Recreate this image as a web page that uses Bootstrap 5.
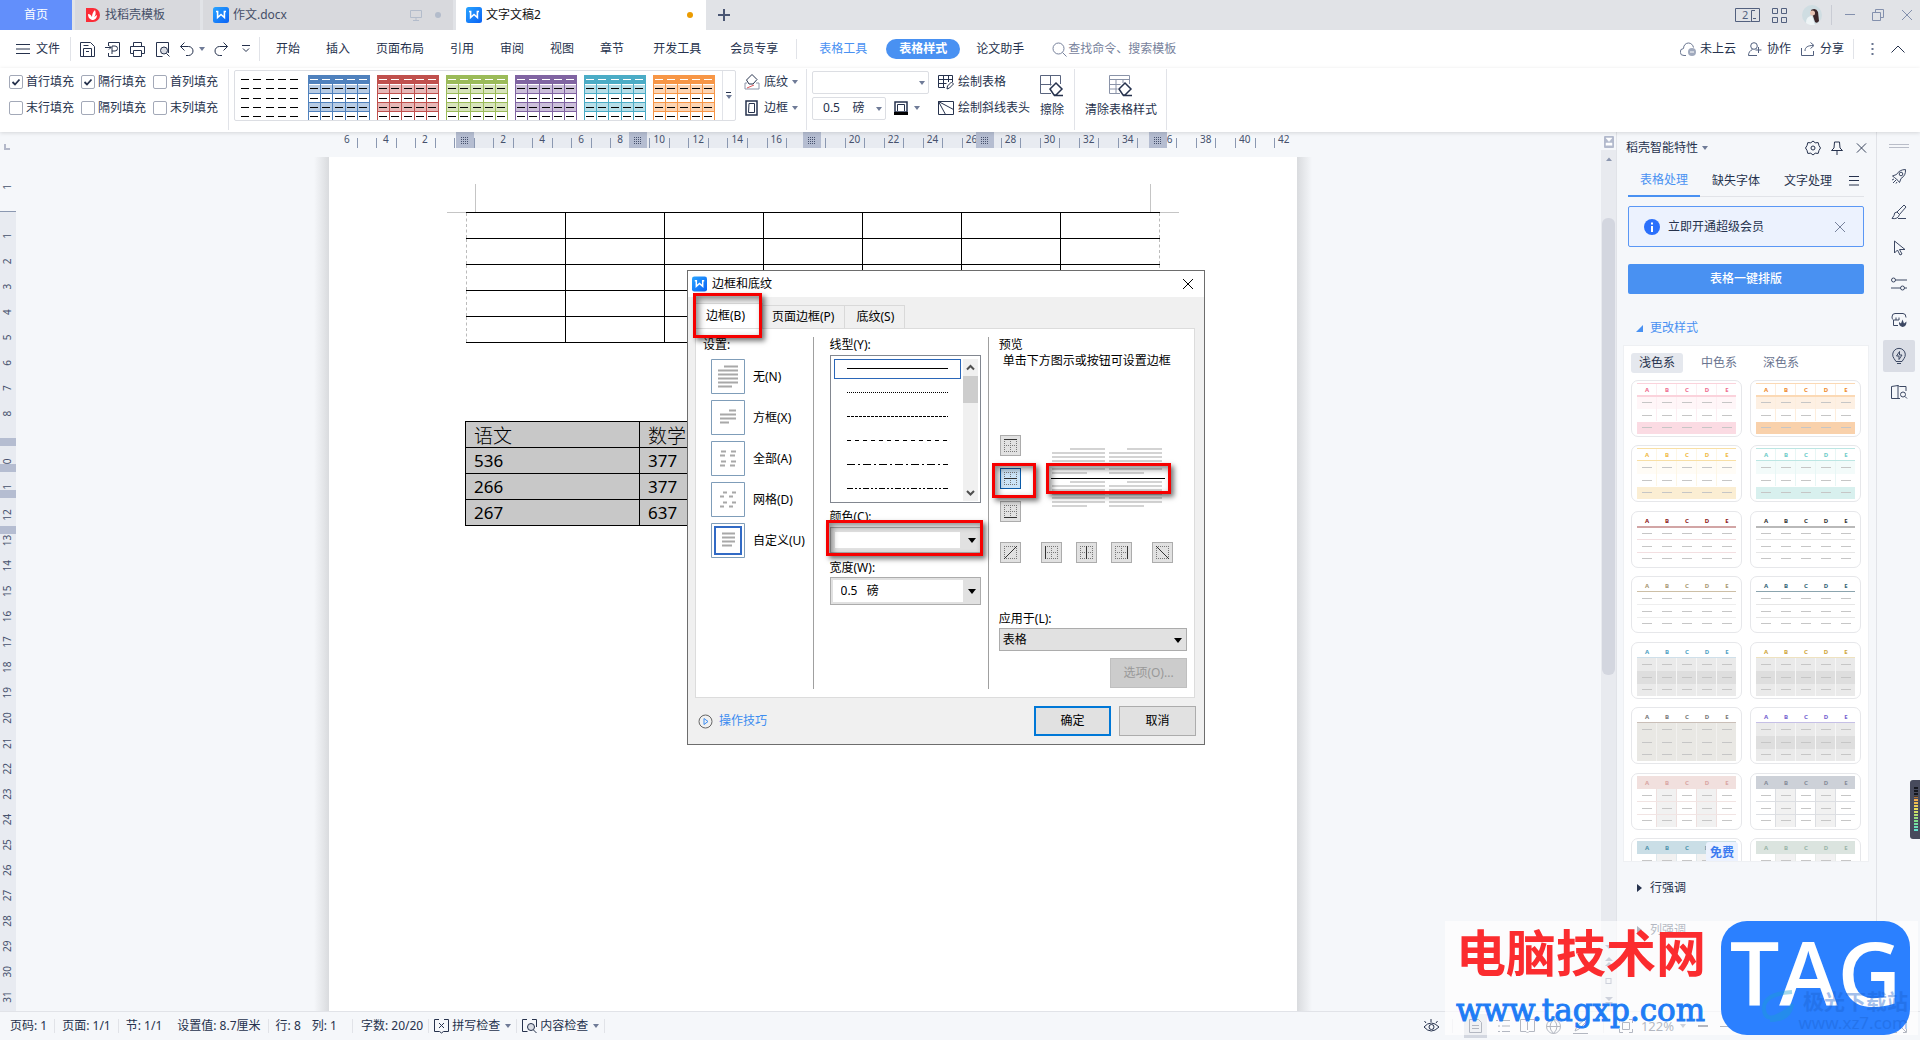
<!DOCTYPE html>
<html lang="zh-CN">
<head>
<meta charset="utf-8">
<title>文字文稿2</title>
<meta name="viewport" content="width=device-width, initial-scale=1">
<link rel="stylesheet" href="https://cdn.jsdelivr.net/npm/bootstrap@5.3.0/dist/css/bootstrap.min.css">
<style>
:root{--ink:#26324d;--line:#e1e3e8;--blue:#4991f2;--pane:#f5f7fa}
html{overflow:hidden}
body{font:12px/16px "Noto Sans","Noto Sans CJK SC",sans-serif;color:var(--ink);background:var(--pane);height:100vh;overflow:hidden}
svg{display:block;flex:none;fill:none;stroke:currentColor}
svg text{stroke:none;fill:currentColor}
button{font:inherit;color:inherit;background:none;border:0;padding:0;white-space:nowrap}
select,input{font:inherit;color:inherit}
a{color:inherit;text-decoration:none}
.caret{width:0;height:0;border:3px solid transparent;border-top:4px solid #6f7b97;border-bottom:0;flex:none}
.vsep{width:1px;background:var(--line);flex:none}
/* tab strip */
.tabstrip{height:30px;background:#e1e3e7}
.doctab{height:30px;padding:0 9px 0 10px;background:#d8d9dd;color:#454f68;gap:4px}
.doctab.current{background:#fff;color:#111}
.tab-home{width:72px;background:#628ffb;color:#fff;margin-right:3px}
.wide-tab{width:250px;margin-right:3px}
.winctl{color:#8390ad}
/* menu row */
.menurow{height:38px;background:#fff}
.menurow .tabs-main{gap:26px;margin-left:16px}
.pill{background:var(--blue);color:#fff;font-weight:700;border-radius:10px;padding:2px 13px}
/* ribbon */
.ribbon{height:64px;background:#fff;box-shadow:0 1px 4px #0002;z-index:2;padding-top:1px}
.ribbon .vsep{height:61px}
.two{display:grid;grid-template-rows:26px 26px;align-items:center}
.checks{grid-template-columns:72px 72px 66px;margin:0 9px}
.checks label{gap:3px}
.checks input{appearance:none;width:14px;height:14px;margin:0;border:1px solid #a3a9b8;border-radius:2px;background:#fff}
.checks input:checked{background:#fff url("data:image/svg+xml,%3Csvg xmlns='http://www.w3.org/2000/svg' viewBox='0 0 12 12'%3E%3Cpath d='M2.5 6l2.5 2.5 4.5-5' fill='none' stroke='%2326324d' stroke-width='1.8'/%3E%3C/svg%3E")}
.gallery{height:51px;width:502px;border:1px solid #dcdee3;border-radius:2px;margin:1px 8px 0 5px;padding:4px 0 0 4px;gap:7px;overflow:hidden}
.boxsel{appearance:none;border:1px solid #dcdee3;border-radius:2px;background:#fff;height:23px;padding:0 10px}
.withcaret{position:relative}
.withcaret>.caret{position:absolute;right:4px;top:10px}
/* workspace */
.hr-strip{height:25px}
.vruler{width:16px}
.sheet{width:968px;background:#fff;box-shadow:-1px 0 0 #dcdde0}
.canvas-area{padding-left:9px}
.sheetwrap{position:relative;width:968px}
.sheetwrap::before,.sheetwrap::after{content:"";position:absolute;top:0;bottom:0;width:15px}
.sheetwrap::before{right:100%;background:linear-gradient(to left,#d9dbde,#f5f7fa)}
.sheetwrap::after{left:100%;background:linear-gradient(to right,#d9dbde,#f5f7fa)}
.doctable{border-collapse:collapse;color:#000}
.t-blank{width:694px;margin:55px 0 0 137px;table-layout:fixed}
.t-blank td{height:26px;border:1px solid #000}
.t-blank td:first-child{border-left:1px dashed #bbb}
.t-blank td:last-child{border-right:1px dashed #bbb}
.t-data{width:694px;margin:78px 0 0 136px;background:#c8c8c8;table-layout:fixed;font-size:17px;line-height:25px}
.t-data td,.t-data th{border:1px solid #000;padding:0 8px;font-weight:400;height:26px}
.t-data th{font-family:"Noto Sans CJK SC",sans-serif;font-weight:300;font-size:19px;line-height:24px}
.marks{position:absolute;left:118px;top:27px;color:#c5c5c5}
/* dialog */
.dlg{position:absolute;left:358px;top:113px;width:518px;background:#f0f0f0;border:1px solid #6d6d6d;color:#000}
.dlg-title{background:#fff;height:26px;padding:0 10px 0 4px}
.dlg-tabs{margin:6px 0 0 7px;height:25px}
.dlg-tabs button{border:1px solid #d9d9d9;border-bottom:0;height:23px;padding:0 10px 0 9px;margin-left:-1px}
.dlg-tabs button+button+button{padding:0 10px 0 11px}
.dlg-tabs .on{background:#fff;height:25px;width:68px;margin:0;padding:0 0 0 10px;text-align:left}
.dlg-panel{background:#fff;border:1px solid #dcdcdc;margin:0 9px 0 7px;height:370px;padding:8px 7px 8px 7px}
.rule{width:1px;background:#a0a0a0;flex:none}
.redbox{position:absolute;border:3px solid #f60000;box-shadow:3px 3px 5px #0008,inset 3px 3px 6px #0007;pointer-events:none}
.opt{height:35px;gap:8px;margin-bottom:6px;text-align:left}
.opt svg{color:#a8a8a8}
.linelist{border:1px solid #828790;width:151px;height:148px;padding:3px 2px 1px 3px}
.linelist button{display:block;width:127px;height:20px;margin-bottom:4px;padding-left:12px;border:1px solid transparent}
.linelist .on{border-color:#2a66b8}
.combo{position:relative;width:151px;border:1px solid #acacac;background:#e1e1e1;padding:2px 17px 2px 2px}
.combo select,.applysel select{appearance:none;border:0;background:#fff;width:100%;height:100%;padding:0 8px;display:block}
.tri{position:absolute;right:4px;top:50%;margin-top:-2px;border:4px solid transparent;border-top:5px solid #000;border-bottom:0;pointer-events:none}
.applysel{position:relative;height:23px;border:1px solid #acacac;background:#e1e1e1}
.applysel select{background:none;padding:0 3px}
.bb{width:21px;height:21px;border:1px solid #acacac;background:#e1e1e1;color:#333}
.bb.on{border-color:#0a5aa8;background:#cce4f7}
.dlgbtn{width:77px;height:30px;border:1px solid #acacac;background:#e1e1e1}
.dlgbtn.go{border:2px solid #0078d7}
.dlgbtn:disabled{background:#ccc;color:#999;border-color:#bfbfbf}
/* scroll bar, task pane */
.vscroll{width:15px;background:#e8eaef;color:#6f7b97}
.thumb{background:#d3d6df;border-radius:6px;height:457px;margin:56px 1px 0 1px}
.taskpane{width:261px;border-left:1px solid var(--line);border-right:1px solid var(--line)}
.ptabs{margin:14px 12px 0 11px;border-bottom:1px solid var(--line);height:27px}
.ptabs button{width:72px;height:27px;padding-bottom:6px}
.ptabs .on{color:var(--blue);border-bottom:2px solid var(--blue)}
.notice{margin:9px 12px 0 11px;height:41px;border:1px solid #5a97f5;border-radius:2px;background:#ecf2fe;padding:0 17px 0 15px;gap:8px}
.onekey{margin:17px 12px 0 11px;height:30px;background:var(--blue);color:#fff;font-weight:500;border-radius:2px}
.stylebox{background:#fff;border:1px solid #eef0f3;margin:9px 7px 0 6px;height:517px;padding:7px 7px 0 7px;overflow:hidden;color:#6a7590}
.stylebox .chips{gap:10px}
.chips button{width:52px;height:20px;border-radius:3px}
.chips .on{background:#e5e8ee;color:var(--ink)}
.stylegrid{display:grid;grid-template-columns:111px 111px;gap:0 8px;height:515px;align-content:space-between;margin-top:7px}
.stylegrid button{position:relative;height:57px;border:1px solid #e6e7ea;border-radius:7px;padding:0 0 0 5px}
.free{position:absolute;right:3px;top:3px;background:#ecf2fe;color:#3b7bf0;font-weight:700;padding:3px 4px;border-radius:3px}
.sidebar{width:43px;padding-top:12px;color:#3c4863}
.sidebar button{width:32px;height:32px;margin-bottom:4px;border-radius:2px}
.sidebar .on{background:#dadde5}
/* status bar */
.status{height:29px;border-top:1px solid var(--line);background:var(--pane)}
.status .vsep{height:14px}
.status .grp{gap:7px}
.mark-over{position:absolute;right:2px;bottom:5px;width:473px;height:114px;background:#ffffffa6;z-index:5;padding-left:11px}
.mark-name{font:700 50px/50px "Noto Sans CJK SC",sans-serif;color:#fb2c2f;white-space:nowrap;margin-top:4px}
.mark-url{font:31px/40px "DejaVu Serif",serif;color:#1f7cf5;white-space:nowrap;margin-top:15px;-webkit-text-stroke:1px #1f7cf5}
.taglogo{position:absolute;right:8px;top:0;width:189px;height:114px;border-radius:26px;background:#2b80ff;color:#fff;font:600 88px/102px "Open Sans",sans-serif;text-align:center;white-space:nowrap}
.ghost{position:absolute;right:10px;bottom:2px;text-align:right;color:#1b62cf;opacity:.4}
.ghost b{display:block;font-size:21px;line-height:26px}
.ghost span{font-size:17px;line-height:18px}
.ghost svg{position:absolute;right:112px;top:0;color:#1b9fd0}
.meter{position:absolute;right:0;top:780px;width:10px;height:59px;background:#474a5c;border-radius:3px 0 0 3px;padding:7px 2px 7px 4px;z-index:5}
.meter i{display:block;height:100%;background:repeating-linear-gradient(transparent 0 2px,#474a5c 2px 3px),linear-gradient(#15171f 20%,#f0a04a 25%,#e8e05a 50%,#7fe08a 75%,#5ee0d8)}
</style>
<script src="https://cdn.jsdelivr.net/npm/bootstrap@5.3.0/dist/js/bootstrap.bundle.min.js"></script>
</head>
<body class="d-flex flex-column position-relative">
<svg width="0" height="0" class="position-absolute">
<defs><linearGradient id="wg" x1="0" y1="0" x2="1" y2="1"><stop offset="0" stop-color="#29a4ff"/><stop offset="1" stop-color="#0a62f5"/></linearGradient></defs>
<symbol id="w" viewBox="0 0 16 16"><rect width="16" height="16" rx="2.5" fill="url(#wg)" stroke="none"/><path d="M3 4.5h1.6v6l3.4-3 3.4 3v-6H13" stroke="#fff" stroke-width="1.6"/></symbol>
<symbol id="x" viewBox="0 0 12 12"><path d="M1 1l10 10M11 1L1 11"/></symbol>
</svg>

<header class="tabstrip d-flex align-items-stretch">
  <button class="tab-home">首页</button>
  <button class="doctab d-flex align-items-center" style="width:125px;margin-right:3px"><svg width="16" height="16"><path d="M1 1h7a7 7 0 0 1 0 14H1z" fill="#fb2c38" stroke="none"/><path d="M7 13C4 12 3 10 3 7c2 0 3 1 4 3 0-3 1-5 3-7 1 3 1 5-1 7l3-2c0 3-2 5-5 5z" fill="#fff" stroke="none"/></svg>找稻壳模板</button>
  <button class="doctab wide-tab d-flex align-items-center"><svg width="16" height="16"><use href="#w"/></svg>作文.docx
    <svg class="ms-auto" width="12" height="12" style="color:#b3bccb;margin-right:6px"><path d="M.5 1.5h11v7H.5zM6 8.500v3M3 11.500h6"/></svg><svg width="12" height="12" style="color:#b3bccb"><circle cx="6" cy="6" r="3" fill="currentColor" stroke="none"/></svg></button>
  <button class="doctab current d-flex align-items-center" style="width:250px"><svg width="16" height="16"><use href="#w"/></svg>文字文稿2
    <svg class="ms-auto" width="14" height="12"><circle cx="7" cy="6" r="3" fill="#eb9b00" stroke="none"/></svg></button>
  <button class="px-2 ms-1" aria-label="新建"><svg width="12" height="12" stroke-width="2" style="color:#4a5673"><path d="M6 0v12M0 6h12"/></svg></button>
  <div class="winctl d-flex align-items-center ms-auto" style="padding-right:7px">
    <svg width="25" height="14" style="color:#52607e"><path d="M15 13.500H.500V.500h24v13h-9z"/><path d="M20 2.500h-3.500v11M18 10.500h3"/><text x="7" y="11" font-size="11">2</text></svg>
    <svg width="15" height="15" style="color:#52607e;margin-left:12px"><path d="M.5.500h5v5h-5zM9.500.500h5v5h-5zM.5 9.500h5v5h-5zM9.500 9.500h5v5h-5z"/></svg>
    <svg width="20" height="20" style="margin-left:15px"><g stroke="none"><circle cx="10" cy="10" r="10" fill="#cfdde2"/><path d="M9 5q5-3 7 2l1 9q-2 3-4 1l-2-6z" fill="#3a2528"/><circle cx="10.500" cy="8" r="2.500" fill="#e8c4b4"/><path d="M4 18q0-7 6-7l3 9q-5 1-9-2z" fill="#eef4f6"/></g></svg>
    <span class="vsep" style="height:20px;margin:0 13px 0 9px;background:#c9ccd4"></span>
    <svg width="10" height="12"><path d="M0 5.500h10"/></svg>
    <svg width="12" height="12" style="margin:0 17px"><path d="M.5 3.500h8v8h-8zM3.500 3V.500h8v8H9"/></svg>
    <svg width="12" height="12"><use href="#x"/></svg>
  </div>
</header>

<nav class="menurow d-flex align-items-center">
  <button class="d-flex align-items-center" style="margin-left:16px;gap:6px"><svg width="14" height="12"><path d="M0 1.500h14M0 6h14M0 10.500h14"/></svg>文件</button>
  <span class="vsep" style="height:24px;margin:0 9px 0 10px"></span>
  <div class="d-flex align-items-center" style="gap:10px">
    <svg width="15" height="15"><path d="M.5.500h10l4 4v10H.5zM3.500 14V6.500h8V14M3.500 3.500h5M6 9.500h3"/></svg>
    <svg width="15" height="15"><path d="M3.500 4V.500h11v14h-11V11M0 5.500h6M4 3.500l2 2-2 2M7 12V4h3a2 2 0 0 1 0 5H7"/></svg>
    <svg width="15" height="15"><path d="M3.500 5V.500h8V5M3.500 11.500h-3v-7h14v7h-3M3.500 8.500h8v6h-8z"/></svg>
    <svg width="15" height="15"><path d="M13.500 11V.500H1.500v14h6"/><circle cx="9" cy="8.500" r="3.500" fill="#d9dce3"/><path d="M11.500 11.500l3 3"/></svg>
    <svg width="14" height="15"><path d="M4.500.500L.5 4.500l4 4M.5 4.500h8a4.500 4.500 0 0 1 0 9H6"/></svg>
  </div>
  <span class="caret" style="margin:0 9px 0 5px"></span>
  <svg width="14" height="15"><path d="M9.500.500l4 4-4 4M13.500 4.500h-8a4.500 4.500 0 0 0 0 9H8"/></svg>
  <svg width="8" height="8" style="margin-left:14px"><path d="M0 .500h8M1 3.500l3 3 3-3"/></svg>
  <span class="vsep" style="height:24px;margin-left:9px"></span>
  <div class="tabs-main d-flex align-items-center">
    <a href="#">开始</a><a href="#">插入</a><a href="#">页面布局</a><a href="#">引用</a><a href="#">审阅</a><a href="#">视图</a><a href="#">章节</a><a href="#" style="padding:0 3px">开发工具</a><a href="#">会员专享</a>
  </div>
  <span class="vsep" style="height:20px;margin:0 22px 0 18px"></span>
  <a href="#" style="color:var(--blue)">表格工具</a>
  <a href="#" class="pill" style="margin:0 16px 0 19px">表格样式</a>
  <a href="#">论文助手</a>
  <button class="d-flex align-items-center" style="margin-left:28px;gap:1px;color:#77829c"><svg width="15" height="15"><circle cx="6.500" cy="6.500" r="5.500"/><path d="M10.500 10.500l4 4"/></svg>查找命令、搜索模板</button>
  <div class="ms-auto d-flex align-items-center" style="padding-right:15px">
    <svg width="17" height="15" style="color:#68748f"><path d="M6 13.500H4a3.500 3.500 0 0 1-.5-7C3.500 3 6 1 8.500 1s4.500 2 5 4.500"/><circle cx="12" cy="10" r="4" fill="#a0a9bd" stroke="none"/><path d="M10 10h4" stroke="#fff"/></svg><button style="margin:0 12px 0 3px">未上云</button>
    <svg width="15" height="14" style="color:#52607e"><circle cx="6" cy="4" r="3.300"/><path d="M9 13.500H.500c0-3 1.500-5 4-6M10.500 5v6M7.500 8h6"/></svg><button style="margin:0 10px 0 4px">协作</button>
    <svg width="15" height="14" style="color:#52607e"><path d="M.5 6v7.500h12V9M4 9c0-4 3-5.500 8-5.500M9.500.500l3.500 3-3.500 3"/></svg><button style="margin:0 9px 0 4px">分享</button>
    <span class="vsep" style="height:20px"></span>
    <svg width="3" height="14" style="margin:0 17px;color:#68748f"><path d="M1.500 1v2M1.500 6v2M1.500 11v2" stroke-width="2"/></svg>
    <svg width="14" height="8"><path d="M.5 7.500L7 1l6.500 6.500"/></svg>
  </div>
</nav>

<section class="ribbon d-flex position-relative">
  <div class="two checks">
    <label class="d-flex align-items-center"><input type="checkbox" checked>首行填充</label><label class="d-flex align-items-center"><input type="checkbox" checked>隔行填充</label><label class="d-flex align-items-center"><input type="checkbox">首列填充</label>
    <label class="d-flex align-items-center"><input type="checkbox">末行填充</label><label class="d-flex align-items-center"><input type="checkbox">隔列填充</label><label class="d-flex align-items-center"><input type="checkbox">末列填充</label>
  </div>
  <span class="vsep"></span>
  <div class="gallery d-flex" id="gallery"></div>
  <div class="two">
    <button class="d-flex align-items-center" style="gap:4px"><svg width="16" height="16"><path d="M8 .500l5 5-4 4.500H5L2.500 6z"/><path d="M3 9H1v6h14V9h-3" stroke="#8d96aa"/><path d="M3 14l7-3" stroke="#e0565b"/></svg>底纹<span class="caret"></span></button>
    <button class="d-flex align-items-center" style="gap:4px"><svg width="16" height="16"><path d="M2 1h11v14H2z" stroke-width="1.500"/><path d="M5 3.500h5.500v9H4.500z"/></svg>边框<span class="caret"></span></button>
  </div>
  <span class="vsep" style="margin:0 5px 0 8px"></span>
  <div class="two">
    <div class="withcaret" style="width:117px"><select class="boxsel w-100" aria-label="线型"><option></option></select><span class="caret"></span></div>
    <div class="d-flex align-items-center"><div class="withcaret" style="width:74px"><select class="boxsel w-100" aria-label="粗细"><option>0.5 &nbsp; &nbsp;磅</option></select><span class="caret"></span></div>
    <svg width="14" height="14" style="margin:0 6px 0 8px"><path d="M1 11V1h12v10z" stroke-width="1.500"/><path d="M3.500 10V3.500h7V10"/><path d="M0 12.500h14" stroke="#000" stroke-width="3"/></svg><span class="caret"></span></div>
  </div>
  <div class="two" style="margin-left:9px">
    <button class="d-flex align-items-center" style="gap:4px"><svg width="16" height="16"><path d="M7 13.500H.500V1.500h14V8M.5 5.500h14M.5 9.500h8M5.500 1.500v12M10.500 1.500V8"/><path d="M9 15l.5-3 4-4 2 2-4 4z" fill="#fff"/></svg>绘制表格</button>
    <button class="d-flex align-items-center" style="gap:4px"><svg width="16" height="16"><path d="M.5 1.500h15v13H.500zM.5 1.500l15 8M.5 1.500l7 13"/></svg>绘制斜线表头</button>
  </div>
  <button class="d-flex flex-column align-items-center" style="margin:6px 10px 0 10px;gap:5px"><svg width="24" height="22"><path d="M11 18.500H.500V.500h20V9M.5 9.500h11M10.500.500v10" stroke="#59647e"/><path d="M10 14l6-6 6 6-6 6h-2zM14 20.500h9" fill="#fff" stroke-width="1.500"/></svg>擦除</button>
  <span class="vsep" style="margin-right:10px"></span>
  <button class="d-flex flex-column align-items-center" style="margin:6px 9px 0 0;gap:5px"><svg width="24" height="22"><path d="M11 18.500H.500V.500h20V9M.5 4.500h20M.5 9.500h11M.5 14h8M7 4v14M14 4v4" stroke="#8a93a8"/><path d="M10 14l6-6 6 6-6 6h-2zM14 20.500h9" fill="#fff" stroke-width="1.500"/></svg>清除表格样式</button>
  <span class="vsep"></span>
</section>

<main class="d-flex flex-grow-1" style="min-height:0">
  <div class="d-flex flex-column flex-grow-1 overflow-hidden">
    <div class="hr-strip d-flex justify-content-center position-relative" style="padding-left:25px">
      <svg id="hruler" width="968" height="25" style="overflow:visible;color:#46516d"></svg>
      <svg width="6" height="6" class="position-absolute" style="left:4px;top:12px;color:#b3b8c9" stroke-width="2"><path d="M1 0v5h5"/></svg>
    </div>
    <div class="d-flex flex-grow-1" style="min-height:0">
      <svg id="vruler" class="vruler h-100" width="16" style="color:#46516d"></svg>
      <div class="canvas-area d-flex justify-content-center flex-grow-1">
        <div class="sheetwrap">
          <div class="sheet h-100 overflow-hidden">
            <svg class="marks" width="732" height="29"><path d="M28.500 0v28M703.500 0v28M0 28.500h19M713 28.500h19"/></svg>
            <table class="doctable t-blank"><tbody id="blank"></tbody></table>
            <table class="doctable t-data"><colgroup><col style="width:174px"><col><col><col></colgroup>
              <thead><tr><th>语文</th><th>数学</th><th></th><th></th></tr></thead>
              <tbody><tr><td>536</td><td>377</td><td></td><td></td></tr><tr><td>266</td><td>377</td><td></td><td></td></tr><tr><td>267</td><td>637</td><td></td><td></td></tr></tbody></table>
          </div>

          <div class="dlg" role="dialog" aria-label="边框和底纹">
            <div class="dlg-title d-flex align-items-center"><svg width="15" height="16"><use href="#w"/></svg><span style="margin-left:5px">边框和底纹</span><button class="ms-auto" aria-label="关闭"><svg width="12" height="12"><use href="#x"/></svg></button></div>
            <div class="dlg-tabs d-flex align-items-end position-relative"><button class="on">边框(B)</button><button>页面边框(P)</button><button>底纹(S)</button>
              <span class="redbox" style="left:-2px;top:-10px;width:69px;height:45px"></span></div>
            <div class="dlg-panel d-flex">
              <div style="width:110px"><div>设置:</div>
                <div id="opts" class="d-flex flex-column" style="margin:6px 0 0 8px"></div></div>
              <span class="rule"></span>
              <div style="margin-left:16px;width:159px" class="position-relative">
                <div style="margin-bottom:2px">线型(Y):</div>
                <div class="linelist d-flex justify-content-between"><div id="lines"></div>
                  <svg width="15" height="142"><path d="M0 0h15v142H0z" fill="#f0f0f0" stroke="none"/><path d="M0 17h15v27H0z" fill="#cdcdcd" stroke="none"/><path d="M4 10.500L7.500 7l3.500 3.500M4 132l3.500 3.500 3.500-3.500" stroke="#505050" stroke-width="2"/></svg></div>
                <label for="clr" style="margin-top:6px">颜色(C):</label>
                <div class="combo" style="height:26px;padding:4px 20px 4px 4px;margin-top:2px"><select id="clr"><option></option></select><span class="tri"></span><span class="redbox" style="left:-5px;top:-8px;width:157px;height:36px"></span></div>
                <label for="wid" style="margin-top:7px">宽度(W):</label>
                <div class="combo" style="height:28px;margin-top:1px"><select id="wid"><option>0.5 &nbsp; 磅</option></select><span class="tri"></span></div>
              </div>
              <span class="rule"></span>
              <div style="margin-left:10px;width:189px" class="d-flex flex-column">
                <div>预览</div><div style="padding-left:4px">单击下方图示或按钮可设置边框</div>
                <div class="d-flex" style="margin-top:66px"><div class="d-flex flex-column position-relative" style="gap:12px" id="bbv"></div>
                  <div class="position-relative" style="margin-left:30px"><svg id="prev" width="115" height="87"></svg><span class="redbox" style="left:-5px;top:28px;width:125px;height:31px"></span></div></div>
                <div class="d-flex" style="margin-top:20px" id="bbh"></div>
                <label for="apply" style="margin-top:48px">应用于(L):</label>
                <div class="applysel" style="margin-top:1px"><select id="apply"><option>表格</option></select><span class="tri"></span></div>
                <button class="dlgbtn align-self-end" style="margin-top:7px" disabled>选项(O)...</button>
              </div>
            </div>
            <div class="d-flex align-items-center" style="padding:8px 8px 8px 10px;gap:8px"><svg width="15" height="15" style="color:#666"><circle cx="7.500" cy="7.500" r="6.500"/><path d="M6 4.500l4 3-4 3z" stroke="#3b8cf0"/></svg><a href="#" style="color:#3b8cf0;margin-left:-2px">操作技巧</a>
              <button class="dlgbtn go ms-auto">确定</button><button class="dlgbtn">取消</button></div>
          </div>
        </div>
      </div>
    </div>
  </div>

  <div class="vscroll position-relative">
    <svg width="15" height="30" style="background:#f5f7fa"><path d="M0 18h15v12H0z" fill="#e8eaef" stroke="none"/><rect x="3" y="4" width="10" height="12" rx="1" fill="#b3bacd" stroke="none"/><path d="M5 6h6L8 9.500zM5 13.500v-2.500h6v2.500" stroke="#fff" fill="#fff" stroke-width=".5"/><path d="M5 29l3-3.500 3 3.500z" fill="#8c97b0" stroke="none"/></svg>
    <div class="thumb"></div>
    <svg class="position-absolute" style="bottom:0;left:0" width="15" height="70"><path d="M4 4h8l-4 4zM4 20l4-4 4 4zM4 25l4-4 4 4zM4 56h8l-4 4zM4 61h8l-4 4z" fill="currentColor" stroke="none"/><rect x="5" y="37.500" width="5" height="5"/></svg>
  </div>

  <aside class="taskpane d-flex flex-column">
    <div class="d-flex align-items-center" style="margin:8px 9px 0 9px"><span>稻壳智能特性</span><span class="caret" style="margin-left:4px"></span>
      <svg class="ms-auto" width="16" height="16"><path d="M8 1l2.200 1.800 3-.2.800 3L15.500 8 14 10.400l-.8 3-3-.2L8 15l-2.200-1.800-3 .2-.8-3L.5 8 2 5.600l.8-3 3 .2z" stroke-linejoin="round"/><circle cx="8" cy="8" r="2"/></svg>
      <svg width="14" height="14" style="margin:0 12px 0 9px"><path d="M4.500 1h5l.5 6 2.500 2.500h-11L4 7zM7 9.500V14"/></svg>
      <svg width="11" height="12"><use href="#x"/></svg></div>
    <div class="ptabs d-flex"><button class="on">表格处理</button><button>缺失字体</button><button>文字处理</button><svg width="10" height="10" style="margin:6px 0 0 5px"><path d="M0 .500h10M0 4.500h10M0 9h10"/></svg></div>
    <div class="notice d-flex align-items-center"><svg width="16" height="16"><circle cx="8" cy="8" r="8" fill="#2b70fb" stroke="none"/><path d="M8 3.500v2M8 7v6" stroke="#fff" stroke-width="2"/></svg><span>立即开通超级会员</span><button class="ms-auto" aria-label="关闭" style="color:#77829c"><svg width="12" height="12"><use href="#x"/></svg></button></div>
    <button class="onekey">表格一键排版</button>
    <button class="d-flex align-items-center" style="margin:26px 0 0 19px;gap:7px;color:var(--blue)"><svg width="7" height="7"><path d="M7 0v7H0z" fill="currentColor" stroke="none"/></svg>更改样式</button>
    <div class="stylebox"><div class="chips d-flex"><button class="on">浅色系</button><button>中色系</button><button>深色系</button></div><div class="stylegrid" id="sg"></div></div>
    <button class="d-flex align-items-center" style="margin:18px 0 0 20px;gap:8px"><svg width="5" height="8"><path d="M0 0l5 4-5 4z" fill="currentColor" stroke="none"/></svg>行强调</button>
    <button class="d-flex align-items-center" style="margin:26px 0 0 20px;gap:8px"><svg width="5" height="8"><path d="M0 0l5 4-5 4z" fill="currentColor" stroke="none"/></svg>列强调</button>
  </aside>

  <div class="sidebar d-flex flex-column align-items-center">
    <svg width="20" height="4" style="color:#b9bdc8;margin-bottom:12px"><path d="M0 .500h20M0 3.500h20"/></svg>
    <div id="side"></div>
    <svg width="16" height="4" class="mt-auto" style="margin-bottom:16px;color:#68748f"><circle cx="2" cy="2" r="1.300"/><circle cx="8" cy="2" r="1.300"/><circle cx="14" cy="2" r="1.300"/></svg>
  </div>
</main>

<footer class="status d-flex align-items-center">
  <div class="grp d-flex align-items-center" style="padding-left:10px"><span>页码: 1</span><span class="vsep"></span><span>页面: 1/1</span><span class="vsep"></span><span>节: 1/1</span><span class="ms-2">设置值: 8.7厘米</span><span class="vsep"></span><span>行: 8</span><span class="ms-1">列: 1</span><span class="vsep ms-2"></span></div>
  <div class="d-flex align-items-center ms-2" style="gap:5px"><span>字数: 20/20</span><span class="vsep"></span>
  <svg width="15" height="15"><path d="M5 .500H.500v12h5L7.500 14l2-1.500h5V.500H10M5 4l5 5M10 4L5 9"/></svg><button style="margin-left:-2px">拼写检查</button><span class="caret"></span><span class="vsep"></span>
  <svg width="15" height="15"><path d="M5 .500H.500v12h5M14.500 8V.500H10M14.500 14l-3-3"/><circle cx="9" cy="8" r="3.500" fill="#d9dce3"/></svg><button style="margin-left:-2px">内容检查</button><span class="caret"></span><span class="vsep"></span></div>
  <div class="d-flex align-items-center ms-auto" style="padding-right:13px">
    <svg width="17" height="16"><path d="M1 9q7-8 15 0-8 8-15 0zM8 4V1M3 5L1.500 3M13 5l1.500-2"/><circle cx="8.500" cy="9" r="2.500"/></svg>
    <span class="vsep" style="margin:0 11px 0 12px"></span>
    <svg width="23" height="24"><path d="M0 0h23v24H0z" fill="#d3d7e0" stroke="none"/><path d="M5.500 5.500h9l3 3v10h-12zM8 11.500h7M8 14.500h7"/></svg>
    <svg width="14" height="14" style="margin:0 10px 0 9px"><path d="M0 1.500h2M4 1.500h10M2 7h2M6 7h8M2 12.500h2M6 12.500h8"/></svg>
    <svg width="15" height="15"><path d="M6 .500H.500v12h5.500l1.500 1.500L9 12.500h5.500V.500H9M7.500 3v8"/></svg>
    <svg width="15" height="15" style="margin:0 12px 0 11px"><circle cx="7.500" cy="7.500" r="7"/><path d="M.5 7.500h14M7.500.500q-7 7 0 14M7.500.500q7 7 0 14"/></svg>
    <svg width="15" height="15"><path d="M0 14.500h15M2 12l2-5 7-6 2 2-7 7z"/></svg>
    <span class="vsep" style="margin:0 15px"></span>
    <svg width="14" height="14"><path d="M0 4V.500h4M10 .500h3.500V4M13.500 10v3.500H10M4 13.500H.500V10M3.500 3.500h7v7h-7z"/></svg>
    <span style="margin:0 6px 0 8px;font-size:13px">122%</span><span class="caret"></span>
    <svg width="182" height="12" style="margin:0 13px 0 12px"><path d="M0 6h10M172 6h10M177 1v10" stroke-width="2"/><path d="M22 6.500h133"/><circle cx="94" cy="6" r="5.500" fill="#fff"/></svg>
    <svg width="14" height="14"><path d="M0 4V.500h4M10 .500h3.500V4M13.500 10v3.500H10M4 13.500H.500V10M1 1l4 4M13 1L9 5M1 13l4-4M13 13L9 9"/></svg>
  </div>
</footer>

<div class="meter"><i></i></div>
<div class="mark-over"><div class="mark-name">电脑技术网</div><div class="mark-url">www.tagxp.com</div>
  <div class="taglogo">TAG</div><div class="ghost"><svg width="36" height="36" stroke-width="4"><path d="M32 4Q2 6 4 22t26-2M10 32q20 0 22-16"/></svg><b>极光下载站</b><span>www.xz7.com</span></div></div>

<script>
const $ = id => document.getElementById(id);
const rep = (n, f) => Array.from({length: n}, (_, i) => f(i)).join('');

/* horizontal ruler: one unit is 19.52px, zero lies 135px inside the sheet */
let h = '<path d="M136 0h684v16H136z" fill="#e8ebf1" stroke="none"/>';
for (let n = -6; n <= 42; n++) {
  const x = 135 + n * 19.52;
  if (n % 2 === 0 && n !== 0) h += `<text x="${x}" y="11" font-size="10" text-anchor="middle">${Math.abs(n)}</text>`;
  if (n < 42) h += `<path d="M${Math.round(x + 9.7)}.500 6v10" stroke="#8b98b1"/>`;
}
[127, 300, 474, 647, 820].forEach(x => {
  h += `<path d="M${x} 0h18v16h-18z" fill="#b5bdd1" stroke="none"/>` + rep(4, i => `<path d="M${x + 5} ${5.5 + i * 2}h8" stroke="#46516d" stroke-dasharray="1 1"/>`);
});
$('hruler').innerHTML = h;

let v = '<path d="M0 54h16v2000H0z" fill="#e8ebf1" stroke="none"/><path d="M0 54.500h16" stroke="#8b98b1"/>';
const vnum = (y, t) => `<text transform="translate(11 ${y}) rotate(-90)" font-size="10" text-anchor="middle">${t}</text>`;
v += vnum(30, 1);
for (let n = 1; n <= 31; n++) if (n !== 9) v += vnum(79 + (n - 1) * 25.37, n);
[281, 307, 333, 369].forEach(y => v += `<path d="M0 ${y}h16v8H0z" fill="#b5bdd1" stroke="none"/>`);
$('vruler').innerHTML = v;

$('blank').innerHTML = rep(5, () => '<tr>' + rep(7, () => '<td></td>') + '</tr>');

/* ribbon table styles */
$('gallery').innerHTML = [null, ['#4f81bd', '#b8cce4'], ['#c0504d', '#e6b8b7'], ['#9bbb59', '#d8e4bc'], ['#8064a2', '#ccc0da'], ['#4bacc6', '#b7dee8'], ['#f79646', '#fcd5b4']].map(c => {
  let s = '';
  if (c) {
    s += `<g stroke="none"><path d="M0 0h62v46H0z" fill="#fff"/><path d="M0 0h62v9H0z" fill="${c[0]}"/><path d="M0 10h62v8H0zM0 28h62v8H0z" fill="${c[1]}"/></g><path d="M0 18.500h62M0 27.500h62M0 36.500h62M.5 9v37M61.500 9v37M12.500 9v37M24.500 9v37M37.500 9v37M49.500 9v37" stroke="${c[0]}"/>`;
  }
  s += rep(5, r => rep(5, k => `<path d="M${2 + Math.round(k * 12.300)} ${[4.5, 13.500, 23.500, 32.500, 41.500][r]}h8" stroke="${c && !r ? '#fff' : '#000'}"/>`));
  return `<button aria-label="表格样式"><svg width="62" height="46">${s}</svg></button>`;
}).join('') + '<svg width="13" height="49" style="margin-top:-4px"><path d="M.5 0v49" stroke="#e1e3e8"/><path d="M4 21.500h5"/><path d="M4 24h6l-3 4z" fill="#6f7b97" stroke="none"/></svg>';

/* border presets */
const presets = [
  ['无(N)', 'M13 7.500h14M7 11.500h20M7 15.500h20M7 19.500h20M7 23.500h20M7 27.500h14'],
  ['方框(X)', 'M18 10.500h7M9 14.500h16M9 18.500h16M9 22.500h9'],
  ['全部(A)', 'M10 10.500h5M20 10.500h5M9 14.500h5M19 14.500h5M10 20.500h5M20 20.500h5M9 24.500h5M19 24.500h5'],
  ['网格(D)', 'M12 10.500h4M21 10.500h4M9 14.500h4M18 14.500h4M12 20.500h4M21 20.500h4M9 24.500h4M18 24.500h4'],
  ['自定义(U)', 'M11 10.500h13M11 14.500h13M11 18.500h13M11 22.500h10']];
$('opts').innerHTML = presets.map((p, i) => `<button class="opt d-flex align-items-center"><svg width="34" height="35"><path d="M.5.500h33v34H.500z" stroke="#7f9db9"/>${i === 4 ? '<path d="M4 4h26v27H4z" stroke="#316ac5" stroke-width="2"/>' : ''}<path d="${p[1]}" stroke-width="2"/></svg>${p[0]}</button>`).join('');

$('lines').innerHTML = ['none', '1 1', '3 1', '4 4', '8 3 2 3', '6 2 2 2 2 2'].map((d, i) => `<button class="${i ? '' : 'on'}" aria-label="线型"><svg width="101" height="2"><path d="M0 .500h101" stroke="#000" stroke-dasharray="${d}"/></svg></button>`).join('');

/* border toggle buttons */
const bb = (d, on, m, dia) => `<button class="bb ${on}" style="margin-left:${m}px" aria-label="边框线"><svg width="19" height="19"><path d="M3.500 3v13M${dia ? '' : '9.500 3v13M'}15.500 3v13M3 3.500h13M3 15.500h13${dia ? '' : 'M3 9.500h13'}" stroke="#777" stroke-dasharray="1 1"/><path d="${d}"/></svg></button>`;
$('bbv').innerHTML = bb('M3 3.500h13', '', 1) + bb('M3 9.500h13', 'on', 1) + bb('M3 15.500h13', '', 1) + '<span class="redbox" style="left:-7px;top:28px;width:44px;height:35px"></span>';
$('bbh').innerHTML = bb('M3 16L16 3', '', 1, 1) + bb('M3.500 3v13', '', 20) + bb('M9.500 3v13', '', 14) + bb('M15.500 3v13', '', 14) + bb('M3 3l13 13', '', 20, 1);

let pv = '';
[14, 47].forEach(y0 => [1, 58].forEach(x => {
  pv += rep(7, i => `<path d="M${x + (i ? 0 : 18)} ${y0 + i * 4}h${i === 0 ? 35 : i === 6 ? 35 : 53}" stroke="#d3d3d3" stroke-width="2"/>`);
}));
$('prev').innerHTML = pv + '<path d="M0 43.500h114" stroke="#000"/>';

/* style cards: letter colour, header fill, header line, its height, three row fills, grid line */
const cards = [
  ['#ee6b8e', '', '#fbd3dc', 2, ['#fff6f8', '', '#fbdbe3'], '#fceef2'], ['#ee8a2c', '', '#fbd9b5', 2, ['#fdf0e3', '', '#f9d1ab'], '#fdeedd'],
  ['#efba45', '', '#f8dfa5', 1, ['#fffcf6', '', '#fbeed3'], '#fdf6e6'], ['#6fcbc8', '', '#bce6e3', 1, ['#f3fbfa', '', '#d8f0ee'], '#e8f6f5'],
  ['#8c1515', '', '#d2a5a5', 2, [], '', '#f3dfe1'], ['#333', '', '#b9b9b9', 2, [], '', '#e6e6e6'],
  ['#a89873', '', '#cdbfa6', 1, [], '', '#eee'], ['#336475', '', '#8ba4ae', 1, [], '', '#e6e6e6'],
  ['#4f9fc4', '', '#cfe0ea', 1, ['#eaeaea', '#dedede', '#eaeaea'], '#f6f6f6'], ['#cda53a', '', '#eee2c0', 1, ['#eaeaea', '#dedede', '#eaeaea'], '#f6f6f6'],
  ['#777', '', '#cabfb8', 1, ['#e9e8e4', '#e9e8e4', '#e9e8e4'], '#f2f1ef'], ['#7562cf', '', '#c6c0e6', 1, ['#eaeaea', '#dedede', '#eaeaea'], '#f6f6f6'],
  ['#d9a5a3', '#f1e0de', '', 0, 'cols', '#eee0df', '#f1e4e3'], ['#868c99', '#cdd1d8', '', 0, 'cols', '#dcdee2', '#dcdee2'],
  ['#4f93ad', '#cadee6', '', 0, 'cols', '#dfe8ec', '#dfe8ec'], ['#9ab5a8', '#dbe4df', '', 0, 'cols', '#e6ebe8', '#e6ebe8']];
$('sg').innerHTML = cards.map((c, n) => {
  const R = (x, y, w, hh, f) => f ? `<rect x="${x}" y="${y}" width="${w}" height="${hh}" fill="${f}" stroke="none"/>` : '';
  let s = R(0, 2, 99, 13, c[1]);
  if (n < 4 ) s += R(0, 2, 99, 1, c[2]);
  if (c[4] === 'cols') s += R(20, 15, 20, 38, '#f1f1f1') + R(60, 15, 20, 38, '#f1f1f1');
  else c[4].forEach((f, i) => s += R(0, 15 + i * 13, 99, 13 - (i === 2), f));
  if (c[5]) s += [20, 40, 60, 80].map(x => R(x - 1, n < 4 ? 3 : 15, 1, n < 4 ? 37 : 38, c[5])).join('');
  if (c[6]) s += R(0, 27, 99, 1, c[6]) + R(0, 40, 99, 1, c[6]);
  s += R(0, 14, 99, c[3], c[2]);
  s += rep(5, i => `<text x="${10 + i * 20}" y="11" font-size="6" font-weight="700" text-anchor="middle" style="fill:${c[0]}">${'ABCDE'[i]}</text>` + R(5 + i * 20, 21, 10, 1, '#c6c6c6') + R(5 + i * 20, 34, 10, 1, '#c6c6c6') + R(5 + i * 20, 46, 10, 1, '#c6c6c6'));
  return `<button aria-label="样式 ${n + 1}"><svg width="100" height="55">${s}</svg>${n === 14 ? '<span class="free">免费</span>' : ''}</button>`;
}).join('');

/* right tool strip */
$('side').innerHTML = [
  '<path d="M14.500 1.500q-6 0-9 5L1.500 8l2 1.500 3.500 3 1.500 2 1.500-4q5-3 4.500-9z"/><circle cx="10" cy="6" r="1.800"/><path d="M1 12l2-1M2 15l3-3M5 15.500l1-1.500"/>',
  '<path d="M6 8l7-7 2 2-6.500 7.500zM6 8q-3 0-3 3.500L1 14.500q6 1 7.500-4M7 14.500h8"/>',
  '<path d="M3.500 1v12l3-3 2.500 5 2-1-2.500-4.500H14z"/>',
  '<circle cx="2.500" cy="4" r="2"/><path d="M4.500 4H16M0 12h9.500M13.500 12H16"/><circle cx="11.500" cy="12" r="2"/>',
  '<path d="M7 13.500H2.500V8A3 3 0 0 1 1 5q0-3.500 3-3.500h8q3 0 3 4M5 5.500v2.500h3V5.500M2.500 8H5"/><path d="M11.500 15q-4-1-3.500-5l2 1.500 1.500-4 1.500 4 2.500-2q0 5-4 5.500z" fill="currentColor" stroke="none"/>',
  '<path d="M5 13.500h6l2-3a6.300 6.300 0 1 0-10 0zM6 15.500h4M8.500 3.500L5.500 8h2.500v3.500L11 7H8.500z"/>',
  '<path d="M7 14.500H.500v-12L7 1.500zM7 1.500l1.500 1H15V7M7 14.500h2"/><circle cx="12" cy="10.500" r="2.500"/><path d="M14 12.500l2 2"/>'
].map((d, i) => `<button class="d-flex align-items-center justify-content-center ${i === 5 ? 'on' : ''}" aria-label="工具 ${i + 1}"><svg width="16" height="16" style="overflow:visible">${d}</svg></button>`).join('');
</script>
</body>
</html>
